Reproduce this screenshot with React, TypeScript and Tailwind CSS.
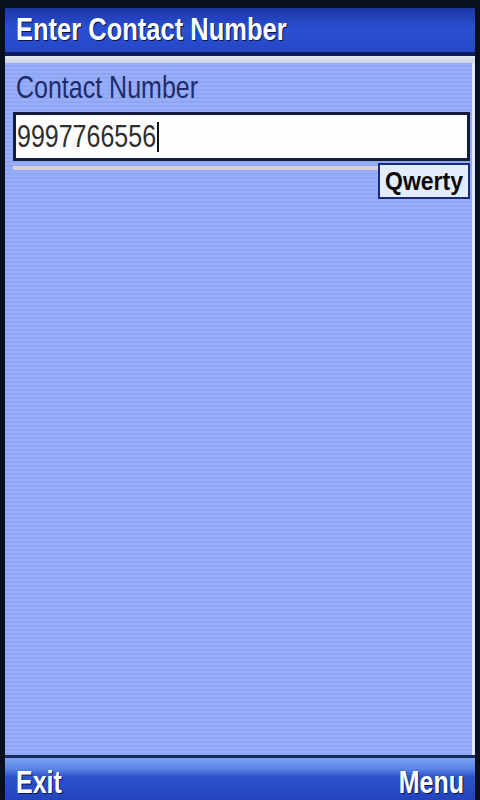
import React from 'react';

const stretch = 'inline-block scale-y-125 origin-center';

const App: React.FC = () => {
  return (
    <div className="w-[480px] h-[800px] bg-[#0a0f1e] flex pl-[5px] pr-[5px] pt-[8px] font-['Liberation_Sans',Arial,sans-serif] overflow-hidden">
      <div className="flex-1 flex flex-col">
        {/* title bar */}
        <div className="h-[44px] bg-[linear-gradient(180deg,#1c36a6_0%,#2a4fd2_45%,#2448c6_100%)] flex items-center pl-[11px]">
          <span className={`${stretch} text-[25.5px] font-bold text-white leading-none [text-shadow:1px_1px_0_#0a1440]`}>
            Enter Contact Number
          </span>
        </div>
        <div className="h-[4px] bg-[#0e1c5e]" />
        <div className="h-[7px] bg-[linear-gradient(180deg,#e6e9ee,#c9d2e4)]" />

        {/* body */}
        <div className="flex-1 flex flex-col pt-[8px] border-r-[3px] border-[#dfe6f7] bg-[repeating-linear-gradient(180deg,#98aef8_0px,#98aef8_2px,#8fa6f4_2px,#8fa6f4_4px)]">
          <div className="h-[32px] flex items-center pl-[11px]">
            <span className={`${stretch} text-[25px] text-[#1f2b68] leading-none`}>Contact Number</span>
          </div>
          <div className="mt-[9px] ml-[8px] mr-[2px] h-[49px] border-[3px] border-[#141c3a] bg-[#fdfdfd] flex items-center pl-[1px]">
            <span className={`${stretch} text-[25px] text-[#2e2e2e] leading-none`}>9997766556</span>
            <span className="w-[2px] h-[30px] bg-[#111] ml-[1px]" />
          </div>
          <div className="flex ml-[8px] mr-[2px]">
            <div className="flex-1 h-[4px] mt-[5px] bg-[#d9cfd6]" />
            <div className="w-[92px] h-[36px] mt-[2px] border-[2px] border-[#1a2a7a] bg-[#e3ecfb] flex items-center justify-center">
              <span className="inline-block scale-y-110 text-[23px] font-bold text-[#0a0a0a] leading-none">Qwerty</span>
            </div>
          </div>
        </div>

        {/* soft key bar */}
        <div className="h-[3px] bg-[#1a2a60]" />
        <div className="h-[42px] bg-[linear-gradient(180deg,#7aa3f2_0%,#5c86e6_25%,#2c52cc_45%,#2244bc_100%)] flex items-center justify-between px-[11px] pt-[6px]">
          <span className={`${stretch} text-[25px] font-bold text-white leading-none [text-shadow:1px_1px_0_#0a1440]`}>Exit</span>
          <span className={`${stretch} text-[25px] font-bold text-white leading-none [text-shadow:1px_1px_0_#0a1440]`}>Menu</span>
        </div>
      </div>
    </div>
  );
};

export default App;
